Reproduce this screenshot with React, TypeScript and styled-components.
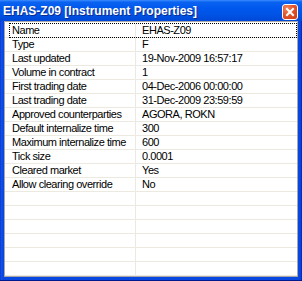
import styled, { createGlobalStyle } from "styled-components";

const rows: [string, string][] = [
  ["Name", "EHAS-Z09"],
  ["Type", "F"],
  ["Last updated", "19-Nov-2009 16:57:17"],
  ["Volume in contract", "1"],
  ["First trading date", "04-Dec-2006 00:00:00"],
  ["Last trading date", "31-Dec-2009 23:59:59"],
  ["Approved counterparties", "AGORA, ROKN"],
  ["Default internalize time", "300"],
  ["Maximum internalize time", "600"],
  ["Tick size", "0.0001"],
  ["Cleared market", "Yes"],
  ["Allow clearing override", "No"],
];

const EMPTY_ROWS = 6;

const Global = createGlobalStyle`
  html, body { margin: 0; padding: 0; background: #fff; }
  body { font-family: "Liberation Sans", Arial, sans-serif; }
`;

const Window = styled.div`
  width: 302px;
  height: 281px;
  box-sizing: border-box;
  display: flex;
  flex-direction: column;
  background: linear-gradient(90deg, #0a2cc0 0px, #1652ea 1px, #0848e0 3px, #0848e0 calc(100% - 3px), #0a3ed8 calc(100% - 1px), #00209a 100%);
  border-bottom: 1px solid #001a8c;
  padding: 0 4px 3px 4px;
`;

const TitleBar = styled.div`
  height: 21px;
  flex: none;
  margin: 0 -4px;
  padding: 0 4px 0 3px;
  display: flex;
  align-items: center;
  justify-content: space-between;
  background: linear-gradient(180deg, #3d8dff 0px, #0b63f0 2px, #0058ee 8px, #0054e6 14px, #0048d6 21px);
`;

const Title = styled.span`
  color: #fff;
  font-weight: bold;
  font-size: 12px;
  letter-spacing: 0px;
  text-shadow: 1px 1px 0 #0a2a90;
  white-space: nowrap;
`;

const CloseButton = styled.div`
  width: 14px;
  height: 14px;
  margin-top: 2px;
  border: 1px solid #fff;
  border-radius: 3px;
  background: radial-gradient(circle at 30% 25%, #f28a5e 0%, #e4522a 45%, #cc3e16 100%);
  display: flex;
  align-items: center;
  justify-content: center;
`;

const List = styled.div`
  flex: 1;
  border: 1px solid #a7a6aa;
  background: #fff;
  padding-top: 2px;
  overflow: hidden;
`;

const Row = styled.div`
  position: relative;
  display: grid;
  grid-template-columns: 131px 1fr;
  height: 14px;
  box-sizing: border-box;
  border-bottom: 1px solid #ebe9e0;
  font-size: 11px;
  letter-spacing: -0.45px;
  line-height: 13px;
  color: #000;
`;

const Cell = styled.div<{ $first?: boolean }>`
  padding-left: ${(p) => (p.$first ? "7px" : "6px")};
  border-right: ${(p) => (p.$first ? "1px solid #ebe9e0" : "none")};
  white-space: nowrap;
  overflow: hidden;
`;

const FocusRect = styled.div`
  position: absolute;
  left: 4px;
  right: 0;
  top: -1px;
  bottom: -1px;
  border: 1px dotted #000;
  pointer-events: none;
`;

export default function App() {
  return (
    <>
      <Global />
      <Window>
        <TitleBar>
          <Title>EHAS-Z09 [Instrument Properties]</Title>
          <CloseButton>
            <svg width="10" height="10" viewBox="0 0 10 10">
              <path d="M2 2 L8 8 M8 2 L2 8" stroke="#fff" strokeWidth="2" strokeLinecap="square" />
            </svg>
          </CloseButton>
        </TitleBar>
        <List>
          {rows.map(([k, v], i) => (
            <Row key={k}>
              {i === 0 && <FocusRect />}
              <Cell $first>{k}</Cell>
              <Cell>{v}</Cell>
            </Row>
          ))}
          {Array.from({ length: EMPTY_ROWS }).map((_, i) => (
            <Row key={"e" + i}>
              <Cell $first />
              <Cell />
            </Row>
          ))}
        </List>
      </Window>
    </>
  );
}
